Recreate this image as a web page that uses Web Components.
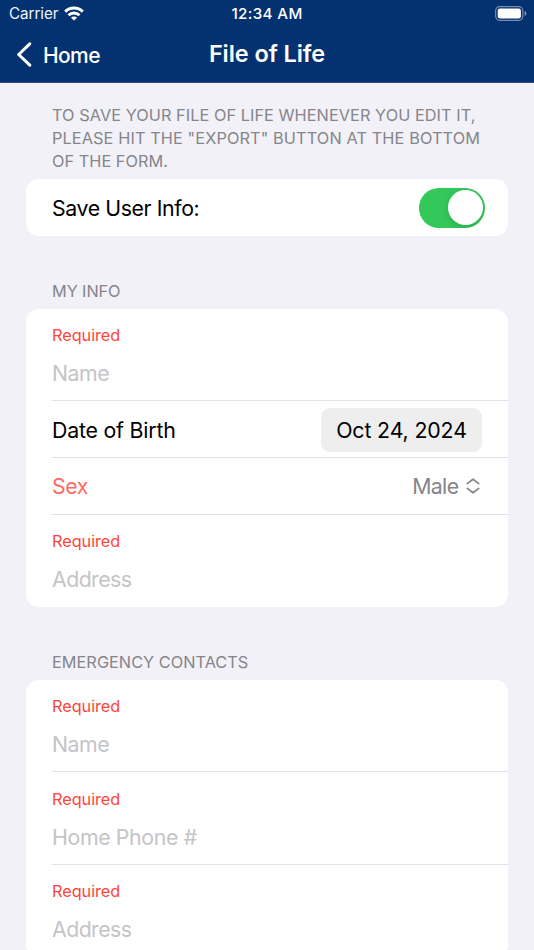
<!DOCTYPE html>
<html lang="en">
<head>
<meta charset="utf-8">
<title>File of Life</title>
<style>
html,body{margin:0;height:100%;overflow:hidden;background:#f2f1f7;font-family:Inter,"Liberation Sans",sans-serif}
</style>
</head>
<body>
<life-app></life-app>
<script>
const define = (name, css, html) => customElements.define(name, class extends HTMLElement {
  constructor() {
    super();
    this.attachShadow({ mode: 'open' }).innerHTML = `<style>*{box-sizing:border-box}${css}</style>${html}`;
  }
});

define('status-bar', `
  :host{display:grid;grid-template-columns:1fr auto 1fr;align-items:center;height:27px;color:#fff;font-size:15.2px;line-height:20px}
  .left{display:flex;align-items:center;padding-left:9px;gap:6px;letter-spacing:-.05px;color:#f1f4f9}
  .time{font-weight:500;letter-spacing:.35px}
  .right{display:flex;justify-content:flex-end;padding-right:7px}
  svg{display:block}`, `
  <div class="left"><span>Carrier</span>
    <svg width="20" height="15" viewBox="0 0 20 15" fill="none" stroke="#fff" stroke-width="2.9">
      <path d="M1.2 5.6a12.5 12.5 0 0 1 17.6 0"/><path d="M4.5 9.2a7.8 7.8 0 0 1 11 0"/>
      <path d="M10 14.6 7 11.7a4.2 4.2 0 0 1 6 0z" fill="#fff" stroke="none"/>
    </svg></div>
  <div class="time">12:34 AM</div>
  <div class="right">
    <svg width="32" height="15" viewBox="0 0 32 15">
      <rect x=".65" y=".65" width="27.2" height="13.7" rx="4" fill="none" stroke="#fff" stroke-opacity=".45" stroke-width="1.2"/>
      <rect x="2.7" y="2.6" width="23.2" height="9.8" rx="2.1" fill="#fff"/>
      <path d="M29.6 5v5c1.2-.5 1.8-1.4 1.8-2.5S30.8 5.5 29.6 5z" fill="#fff" fill-opacity=".5"/>
    </svg></div>`);

define('nav-bar', `
  :host{display:grid;grid-template-columns:1fr auto 1fr;align-items:center;height:56px;color:#fff;padding-bottom:2px}
  .back{display:flex;align-items:center;gap:11px;padding:2px 0 0 16px;font-size:21px;font-weight:550;letter-spacing:-.6px;line-height:28px}
  .back span{padding-top:1px}
  .title{font-size:23.5px;font-weight:600;letter-spacing:-.08px;line-height:28px}
  svg{display:block}`, `
  <div class="back"><svg width="16" height="26" viewBox="0 0 16 26" fill="none" stroke="#fff" stroke-width="3" stroke-linecap="round" stroke-linejoin="round"><path d="M13.8 1.8 2.7 12.5l11.1 10.7"/></svg><span><slot name="back"></slot></span></div>
  <div class="title"><slot></slot></div><div></div>`);

define('form-section', `
  :host{display:block;padding:0 26px}
  .label{padding-left:26px;font-size:16.3px;line-height:23px;color:#85858b;letter-spacing:.03px;white-space:nowrap}
  .card{margin-top:6.3px;background:#fff;border-radius:13px;overflow:hidden}`, `
  <div class="label"><slot name="label"></slot></div>
  <div class="card"><slot></slot></div>`);

define('form-row', `
  :host{display:block;height:56.8px;padding-left:26px;font-size:21.3px}
  .in{height:100%;display:flex;align-items:center;justify-content:space-between;padding:var(--drop,0) 26px 0 0;border-bottom:1px solid #e2e2e5;letter-spacing:var(--ls,-.2px);color:var(--ink,#000);line-height:28px}
  :host([last]) .in{border-bottom:0}`, `
  <div class="in"><span><slot></slot></span><slot name="value"></slot></div>`);

define('text-field', `
  :host{display:block;height:var(--field,92.5px);padding-left:26px}
  .in{height:100%;padding-top:var(--top,15px);border-bottom:1px solid #e2e2e5}
  :host([last]) .in{border-bottom:0}
  .req{font-size:16.3px;line-height:23px;letter-spacing:-.05px;color:#ff453a}
  .ph{margin-top:12px;font-size:21.3px;line-height:28px;letter-spacing:var(--ls,-.5px);color:#c4c4c6}`, `
  <div class="in"><div class="req">Required</div><div class="ph"><slot></slot></div></div>`);

define('toggle-switch', `
  :host{display:block;width:66px;height:40px;border-radius:20px;background:#34c759;padding:2.5px;margin-right:-3px;overflow:hidden;box-sizing:border-box}
  .knob{width:35px;height:35px;border-radius:50%;background:#fff;margin-left:auto;box-shadow:0 2px 7px #00000024}
  `, `<div class="knob"></div>`);

define('date-pill', `
  :host{display:flex;align-items:center;justify-content:center;width:161px;height:44px;border-radius:9px;background:#eeeeef;color:#000;letter-spacing:-.12px}`, `<slot></slot>`);

define('picker-value', `
  :host{display:flex;align-items:center;gap:7.5px;color:#85858a;letter-spacing:-.6px}
  svg{display:block;margin-right:2px}`, `
  <slot></slot><svg width="14" height="16" viewBox="0 0 14 16" fill="none" stroke="#85858a" stroke-width="1.7" stroke-linecap="round" stroke-linejoin="round"><path d="M1.2 5.6 7 1.2l5.8 4.4M1.2 10.4 7 14.8l5.8-4.4"/></svg>`);

define('life-app', `
  :host{display:block;width:534px;height:950px;overflow:hidden}
  header{height:83px;background:#04316f;border-bottom:1px solid #2b5089}
  main{display:flex;flex-direction:column}
  .a{padding-top:21px;height:153px}
  .b{padding-top:43.7px;height:371px;--field:92px}
  .c{padding-top:43.7px}
  .a [slot=label] div:nth-child(1){letter-spacing:.055px}
  .a [slot=label] div:nth-child(2){letter-spacing:.11px}`, `
  <header><status-bar></status-bar><nav-bar><span slot="back">Home</span>File of Life</nav-bar></header>
  <main>
    <div class="a"><form-section>
      <div slot="label"><div>TO SAVE YOUR FILE OF LIFE WHENEVER YOU EDIT IT,</div><div>PLEASE HIT THE "EXPORT" BUTTON AT THE BOTTOM</div><div>OF THE FORM.</div></div>
      <form-row last style="--ls:-.4px">Save User Info:<toggle-switch slot="value"></toggle-switch></form-row>
    </form-section></div>
    <div class="b"><form-section>
      <span slot="label" style="letter-spacing:-.08px">MY INFO</span>
      <text-field>Name</text-field>
      <form-row style="--drop:1.6px">Date of Birth<date-pill slot="value">Oct 24, 2024</date-pill></form-row>
      <form-row style="--ink:#ff6a63;--ls:-.45px;--drop:1px">Sex<picker-value slot="value">Male</picker-value></form-row>
      <text-field last style="--ls:-.55px">Address</text-field>
    </form-section></div>
    <div class="c"><form-section>
      <span slot="label">EMERGENCY CONTACTS</span>
      <text-field>Name</text-field>
      <text-field style="--ls:-.36px;--top:15.6px">Home Phone #</text-field>
      <text-field style="--ls:-.55px">Address</text-field>
    </form-section></div>
  </main>`);
</script>
</body>
</html>
